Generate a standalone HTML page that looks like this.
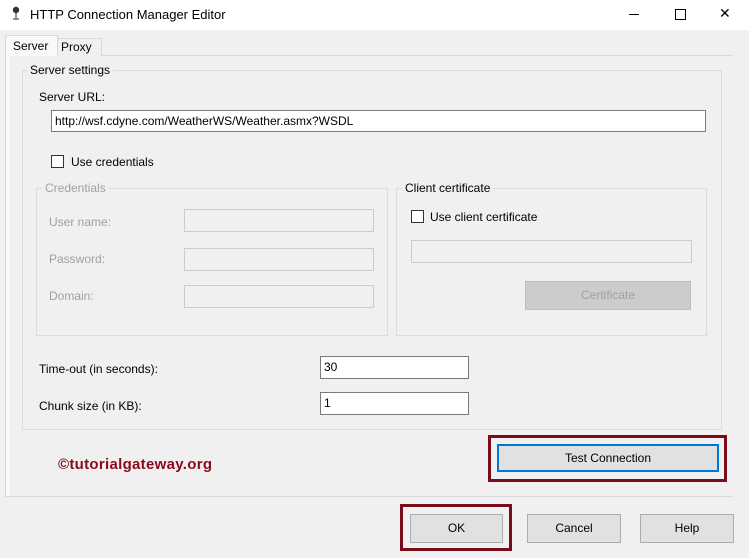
<!DOCTYPE html><html><head><style>
body{margin:0;width:749px;height:558px;background:#f0f0f0;font-family:"Liberation Sans",sans-serif;font-size:12px;color:#000;position:relative;overflow:hidden}
.a{position:absolute}
.box{position:absolute;border:1px solid #dcdcdc}
.lbl{position:absolute;background:#f0f0f0;padding:0 3px}
.tb{position:absolute;border:1px solid #7a7a7a;background:#fff;box-sizing:border-box;padding:3px 3px;font-size:12px}
.dis{position:absolute;border:1px solid #ccc;background:#f0f0f0;box-sizing:border-box}
.gray{color:#a0a0a0}
.btn{position:absolute;background:#e1e1e1;border:1px solid #adadad;box-sizing:border-box;text-align:center}
.cb{position:absolute;width:11px;height:11px;border:1px solid #333;background:#fff}
.red{position:absolute;border:3px solid #7b0a1a;box-sizing:border-box}
</style></head><body>
<div class="a" style="left:0;top:0;width:749px;height:30px;background:#fff"></div>
<svg class="a" style="left:11px;top:6px" width="10" height="14"><circle cx="5" cy="4" r="3.2" fill="#333"/><line x1="5" y1="7" x2="5" y2="13" stroke="#333"/><line x1="2" y1="13" x2="8" y2="13" stroke="#333"/></svg>
<div class="a" style="left:30px;top:7px;font-size:13px">HTTP Connection Manager Editor</div>
<div class="a" style="left:629px;top:14px;width:10px;height:1px;background:#000"></div>
<div class="a" style="left:675px;top:9px;width:9px;height:9px;border:1px solid #000"></div>
<div class="a" style="left:719px;top:5px;font-size:14px">✕</div>
<div class="a" style="left:5px;top:55px;width:728px;height:442px;border:1px solid #d9d9d9;background:#f9f9f9;box-sizing:border-box"></div>
<div class="a" style="left:56px;top:38px;width:44px;height:17px;border:1px solid #d9d9d9;border-bottom:none;background:#f0f0f0"></div>
<div class="a" style="left:61px;top:40px">Proxy</div>
<div class="a" style="left:5px;top:35px;width:51px;height:21px;border:1px solid #d9d9d9;border-bottom:none;background:#f9f9f9"></div>
<div class="a" style="left:13px;top:39px">Server</div>
<div class="a" style="left:10px;top:56px;width:723px;height:440px;background:#f0f0f0"></div>
<div class="box" style="left:22px;top:70px;width:698px;height:358px"></div>
<div class="lbl" style="left:27px;top:63px">Server settings</div>
<div class="a" style="left:39px;top:90px">Server URL:</div>
<div class="tb" style="left:51px;top:110px;width:655px;height:22px">http://wsf.cdyne.com/WeatherWS/Weather.asmx?WSDL</div>
<div class="cb" style="left:51px;top:155px"></div><div class="a" style="left:71px;top:155px">Use credentials</div>
<div class="box" style="left:36px;top:188px;width:350px;height:146px"></div>
<div class="lbl gray" style="left:42px;top:181px">Credentials</div>
<div class="a gray" style="left:49px;top:215px">User name:</div>
<div class="a gray" style="left:49px;top:252px">Password:</div>
<div class="a gray" style="left:49px;top:289px">Domain:</div>
<div class="dis" style="left:184px;top:209px;width:190px;height:23px"></div>
<div class="dis" style="left:184px;top:248px;width:190px;height:23px"></div>
<div class="dis" style="left:184px;top:285px;width:190px;height:23px"></div>
<div class="box" style="left:396px;top:188px;width:309px;height:146px"></div>
<div class="lbl" style="left:402px;top:181px">Client certificate</div>
<div class="cb" style="left:411px;top:210px"></div><div class="a" style="left:430px;top:210px">Use client certificate</div>
<div class="dis" style="left:411px;top:240px;width:281px;height:23px"></div>
<div class="btn gray" style="left:525px;top:281px;width:166px;height:29px;background:#cccccc;border-color:#bfbfbf;line-height:27px">Certificate</div>
<div class="a" style="left:39px;top:362px">Time-out (in seconds):</div>
<div class="tb" style="left:320px;top:356px;width:149px;height:23px">30</div>
<div class="a" style="left:39px;top:399px">Chunk size (in KB):</div>
<div class="tb" style="left:320px;top:392px;width:149px;height:23px">1</div>
<div class="a" style="left:58px;top:456px;color:#8b0a1a;font-weight:bold;font-size:15px;letter-spacing:0.3px">©tutorialgateway.org</div>
<div class="red" style="left:488px;top:435px;width:239px;height:47px"></div>
<div class="btn" style="left:497px;top:444px;width:222px;height:28px;border:2px solid #0078d7;line-height:24px">Test Connection</div>
<div class="red" style="left:400px;top:504px;width:112px;height:47px"></div>
<div class="btn" style="left:410px;top:514px;width:93px;height:29px;line-height:27px">OK</div>
<div class="btn" style="left:527px;top:514px;width:94px;height:29px;line-height:27px">Cancel</div>
<div class="btn" style="left:640px;top:514px;width:94px;height:29px;line-height:27px">Help</div>
</body></html>
